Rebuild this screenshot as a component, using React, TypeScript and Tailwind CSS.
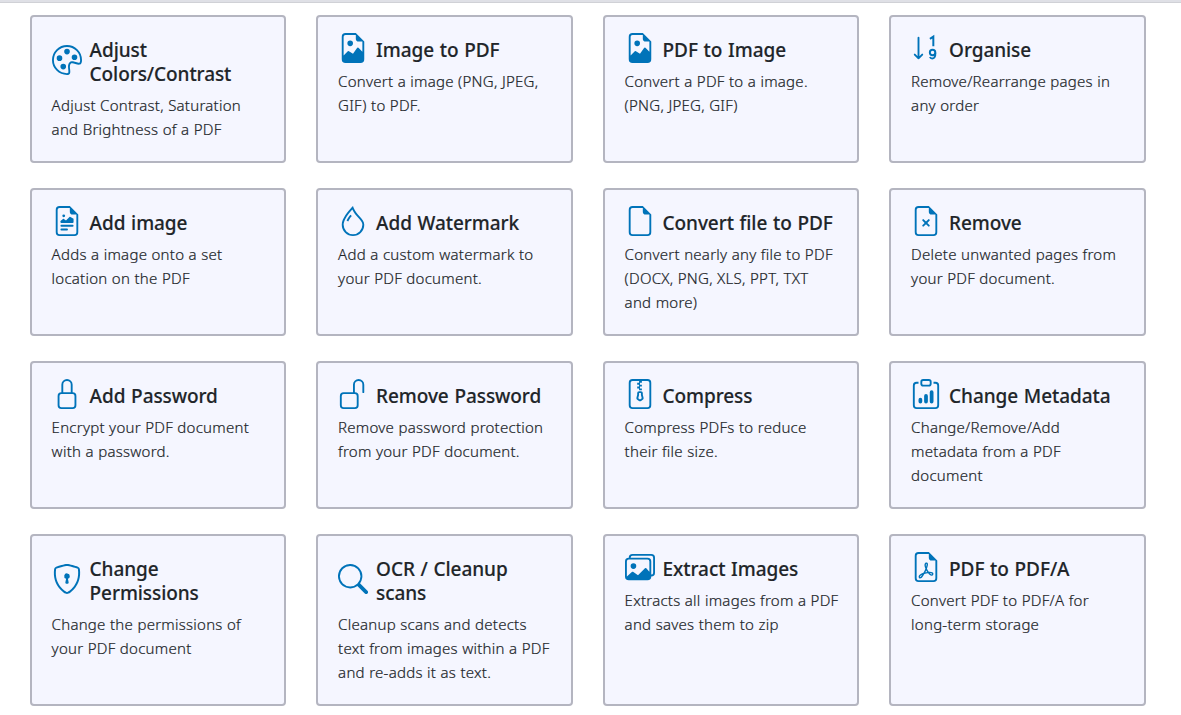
import React from "react";
import type { ComponentType } from "react";
import {
  BsPalette,
  BsFileEarmarkImage,
  BsFileEarmarkRichtext,
  BsDroplet,
  BsFileEarmark,
  BsFileEarmarkX,
  BsLock,
  BsUnlock,
  BsFileZip,
  BsClipboardData,
  BsShieldLock,
  BsSearch,
  BsImages,
  BsFileEarmarkPdf,
} from "react-icons/bs";

type IconProps = { className?: string };
type Feature = { icon: ComponentType<IconProps>; title: string[]; text: string[] };

function SortNumericIcon({ className }: IconProps) {
  return (
    <svg viewBox="0 0 16 16" fill="none" stroke="currentColor" className={className} aria-hidden="true">
      <path d="M4 2.5v11M2 11.5l2 2 2-2" strokeLinecap="round" strokeLinejoin="round" />
      <path d="M10.1 3.1l1.81-1.2V7" strokeWidth="1.05" />
      <circle cx="11.5" cy="10.4" r="1.45" strokeWidth="1.05" />
      <path d="M12.98 10.5C13.1 13.2 12.1 13.6 11.3 13.6C10.7 13.6 10.3 13.3 10.1 12.8" strokeWidth="1.05" />
    </svg>
  );
}

const features: Feature[] = [
  { icon: BsPalette, title: ["Adjust", "Colors/Contrast"], text: ["Adjust Contrast, Saturation", "and Brightness of a PDF"] },
  { icon: BsFileEarmarkImage, title: ["Image to PDF"], text: ["Convert a image (PNG, JPEG,", "GIF) to PDF."] },
  { icon: BsFileEarmarkImage, title: ["PDF to Image"], text: ["Convert a PDF to a image.", "(PNG, JPEG, GIF)"] },
  { icon: SortNumericIcon, title: ["Organise"], text: ["Remove/Rearrange pages in", "any order"] },
  { icon: BsFileEarmarkRichtext, title: ["Add image"], text: ["Adds a image onto a set", "location on the PDF"] },
  { icon: BsDroplet, title: ["Add Watermark"], text: ["Add a custom watermark to", "your PDF document."] },
  { icon: BsFileEarmark, title: ["Convert file to PDF"], text: ["Convert nearly any file to PDF", "(DOCX, PNG, XLS, PPT, TXT", "and more)"] },
  { icon: BsFileEarmarkX, title: ["Remove"], text: ["Delete unwanted pages from", "your PDF document."] },
  { icon: BsLock, title: ["Add Password"], text: ["Encrypt your PDF document", "with a password."] },
  { icon: BsUnlock, title: ["Remove Password"], text: ["Remove password protection", "from your PDF document."] },
  { icon: BsFileZip, title: ["Compress"], text: ["Compress PDFs to reduce", "their file size."] },
  { icon: BsClipboardData, title: ["Change Metadata"], text: ["Change/Remove/Add", "metadata from a PDF", "document"] },
  { icon: BsShieldLock, title: ["Change", "Permissions"], text: ["Change the permissions of", "your PDF document"] },
  { icon: BsSearch, title: ["OCR / Cleanup", "scans"], text: ["Cleanup scans and detects", "text from images within a PDF", "and re-adds it as text."] },
  { icon: BsImages, title: ["Extract Images"], text: ["Extracts all images from a PDF", "and saves them to zip"] },
  { icon: BsFileEarmarkPdf, title: ["PDF to PDF/A"], text: ["Convert PDF to PDF/A for", "long-term storage"] },
];

function Lines({ lines }: { lines: string[] }) {
  return (
    <>
      {lines.map((line) => (
        <span key={line} className="block whitespace-nowrap">
          {line}
        </span>
      ))}
    </>
  );
}

function FeatureCard({ icon: Icon, title, text }: Feature) {
  return (
    <a className="block rounded border-2 border-[#b4b5c0] bg-[#f5f6ff] px-5 pt-[21px] pb-5">
      <div className="flex items-center gap-2">
        <Icon className="-mt-[7px] -mb-[3px] size-[30px] shrink-0 text-[#0073b9]" />
        <h5 className="text-[19px] leading-6 font-medium tracking-[-0.08px] [-webkit-text-stroke:0.15px] [word-spacing:0.9px]">
          <Lines lines={title} />
        </h5>
      </div>
      <p className="mt-[7px] text-[15px] leading-6 font-light tracking-[0.25px] [-webkit-text-stroke:0.2px] [word-spacing:0.2px]">
        <Lines lines={text} />
      </p>
    </a>
  );
}

export default function App() {
  return (
    <div className="h-[715px] overflow-hidden bg-white font-['Noto_Sans','Open_Sans',sans-serif] text-[#212529]">
      <div className="h-[3px] border-b border-[#d0d1d6] bg-[#dfe0e6]" />
      <main className="ml-[29.6px] grid w-[1116px] grid-cols-4 gap-x-[30px] gap-y-[25px] pt-3">
        {features.map((feature) => (
          <FeatureCard key={feature.title.join(" ")} {...feature} />
        ))}
      </main>
    </div>
  );
}
